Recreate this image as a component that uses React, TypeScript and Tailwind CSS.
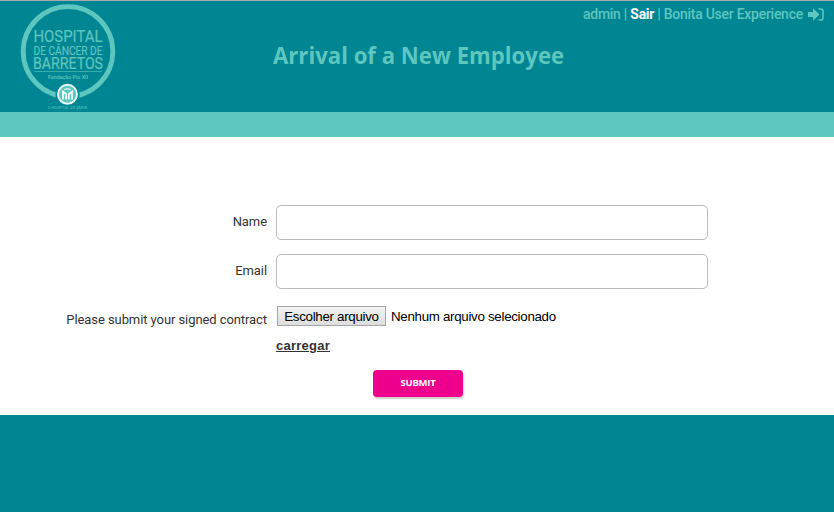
import React from "react";

function Logo() {
  return (
    <svg
      className="ml-[19px] mt-[2px] h-[109px] w-[98px] shrink-0"
      viewBox="19 3 98 109"
      fill="#5dc6bf"
      fontFamily="Roboto, sans-serif"
      textAnchor="middle"
    >
      <circle cx="68" cy="51.500" r="44.800" fill="none" stroke="#5dc6bf" strokeWidth="4.800" />
      <text x="68" y="41.500" fontSize="17" textLength="69" lengthAdjust="spacingAndGlyphs" stroke="#5dc6bf" strokeWidth=".2">HOSPITAL</text>
      <text x="68" y="54.500" fontSize="13" textLength="69" lengthAdjust="spacingAndGlyphs" stroke="#5dc6bf" strokeWidth=".2">DE CÂNCER DE</text>
      <text x="68" y="69.200" fontSize="16.500" textLength="70" lengthAdjust="spacingAndGlyphs" stroke="#5dc6bf" strokeWidth=".2">BARRETOS</text>
      <path d="M34 71.500h68" stroke="#5dc6bf" strokeWidth=".6" />
      <text x="68" y="78.500" fontSize="5.200" fontWeight="500" textLength="40">Fundação Pio XII</text>
      <circle cx="67.500" cy="94.300" r="12" fill="#008593" />
      <circle cx="67.500" cy="94.300" r="9.500" fill="#5dc6bf" stroke="#e6f7f5" strokeWidth="2" />
      <path d="M64.500 89.500q3-1.500 6 0" fill="none" stroke="#fff" strokeWidth="1.200" />
      <path d="M63 99.500v-8l3.200 2.700v5.300M72 99.500v-8l-3.200 2.700v5.300" fill="none" stroke="#fff" strokeWidth="1.700" />
      <text x="67.500" y="109" fontSize="3.700" textLength="39">O HOSPITAL DO AMOR</text>
    </svg>
  );
}

function Field({ label }: { label: string }) {
  return (
    <label className="flex h-[35px] items-center text-[13px] tracking-[-0.08px]">
      <span className="mr-[9px] w-[267px] pb-[2px] text-right">{label}</span>
      <input className="h-[35px] w-[432px] rounded-[5px] border border-[#bbb] bg-white px-3 outline-none" />
    </label>
  );
}

export default function App() {
  return (
    <div className="flex h-[512px] w-[834px] flex-col overflow-hidden bg-[#008593] font-['Roboto',sans-serif] text-[#333]">
      <header className="flex h-[112px] shrink-0 border-t border-[#a5aaaa] text-[#5dc6bf]">
        <Logo />
        <h1 className="ml-[156px] mt-[37px] w-[310px] origin-left scale-x-[0.923] whitespace-nowrap font-['Open_Sans',sans-serif] text-[24px] font-bold leading-[34px]">
          Arrival of a New Employee
        </h1>
        <nav className="mt-[3px] flex h-[20px] items-center whitespace-nowrap text-[14px] font-medium tracking-[-0.27px]">
          <span>admin |&nbsp;</span>
          <a className="font-bold text-white">Sair</a>
          <span>&nbsp;| Bonita User Experience</span>
          <svg className="ml-[5px] h-[13px] w-[16px]" viewBox="0 0 16 13">
            <path d="M0 4h5V.300l6.500 6.200L5 12.700V9H0z" fill="#5dc6bf" />
            <path d="M10.500 1h2.200q2.300 0 2.300 2.300v6.400q0 2.300-2.300 2.300h-2.200" fill="none" stroke="#5dc6bf" strokeWidth="1.600" />
          </svg>
        </nav>
      </header>
      <div className="h-[25px] shrink-0 bg-[#5dc6bf]" />
      <main className="h-[278px] shrink-0 bg-white pt-[68px]">
        <div className="flex flex-col gap-[14px]">
          <Field label="Name" />
          <Field label="Email" />
        </div>
        <div className="mt-[17px] flex h-[20px]">
          <span className="mr-[10px] mt-[4px] w-[267px] whitespace-nowrap text-right text-[13px] leading-[20px] tracking-[-0.08px]">
            Please submit your signed contract
          </span>
          <div className="flex items-center font-['Liberation_Sans',sans-serif] text-[13.330px] tracking-[-0.3px] text-black">
            <button className="h-[20px] w-[109px] whitespace-nowrap border border-[#a6a6a6] bg-linear-to-b from-[#f3f3f3] to-[#dddddd] pt-px leading-[18px]">
              Escolher arquivo
            </button>
            <span className="ml-[5px] pt-[2px]">Nenhum arquivo selecionado</span>
          </div>
        </div>
        <a className="ml-[276px] mt-[10px] block w-fit font-['Liberation_Sans',sans-serif] text-[13px] font-bold leading-[20px] tracking-[0.25px] underline">
          carregar
        </a>
        <button className="ml-[373px] mt-[14px] block h-[27px] w-[90px] rounded-[4px] bg-[#ee008c] pb-px font-['Open_Sans',sans-serif] text-[9.500px] font-bold tracking-[-0.2px] text-white shadow-[1px_2px_2px_rgba(0,0,0,0.2)]">
          SUBMIT
        </button>
      </main>
    </div>
  );
}
